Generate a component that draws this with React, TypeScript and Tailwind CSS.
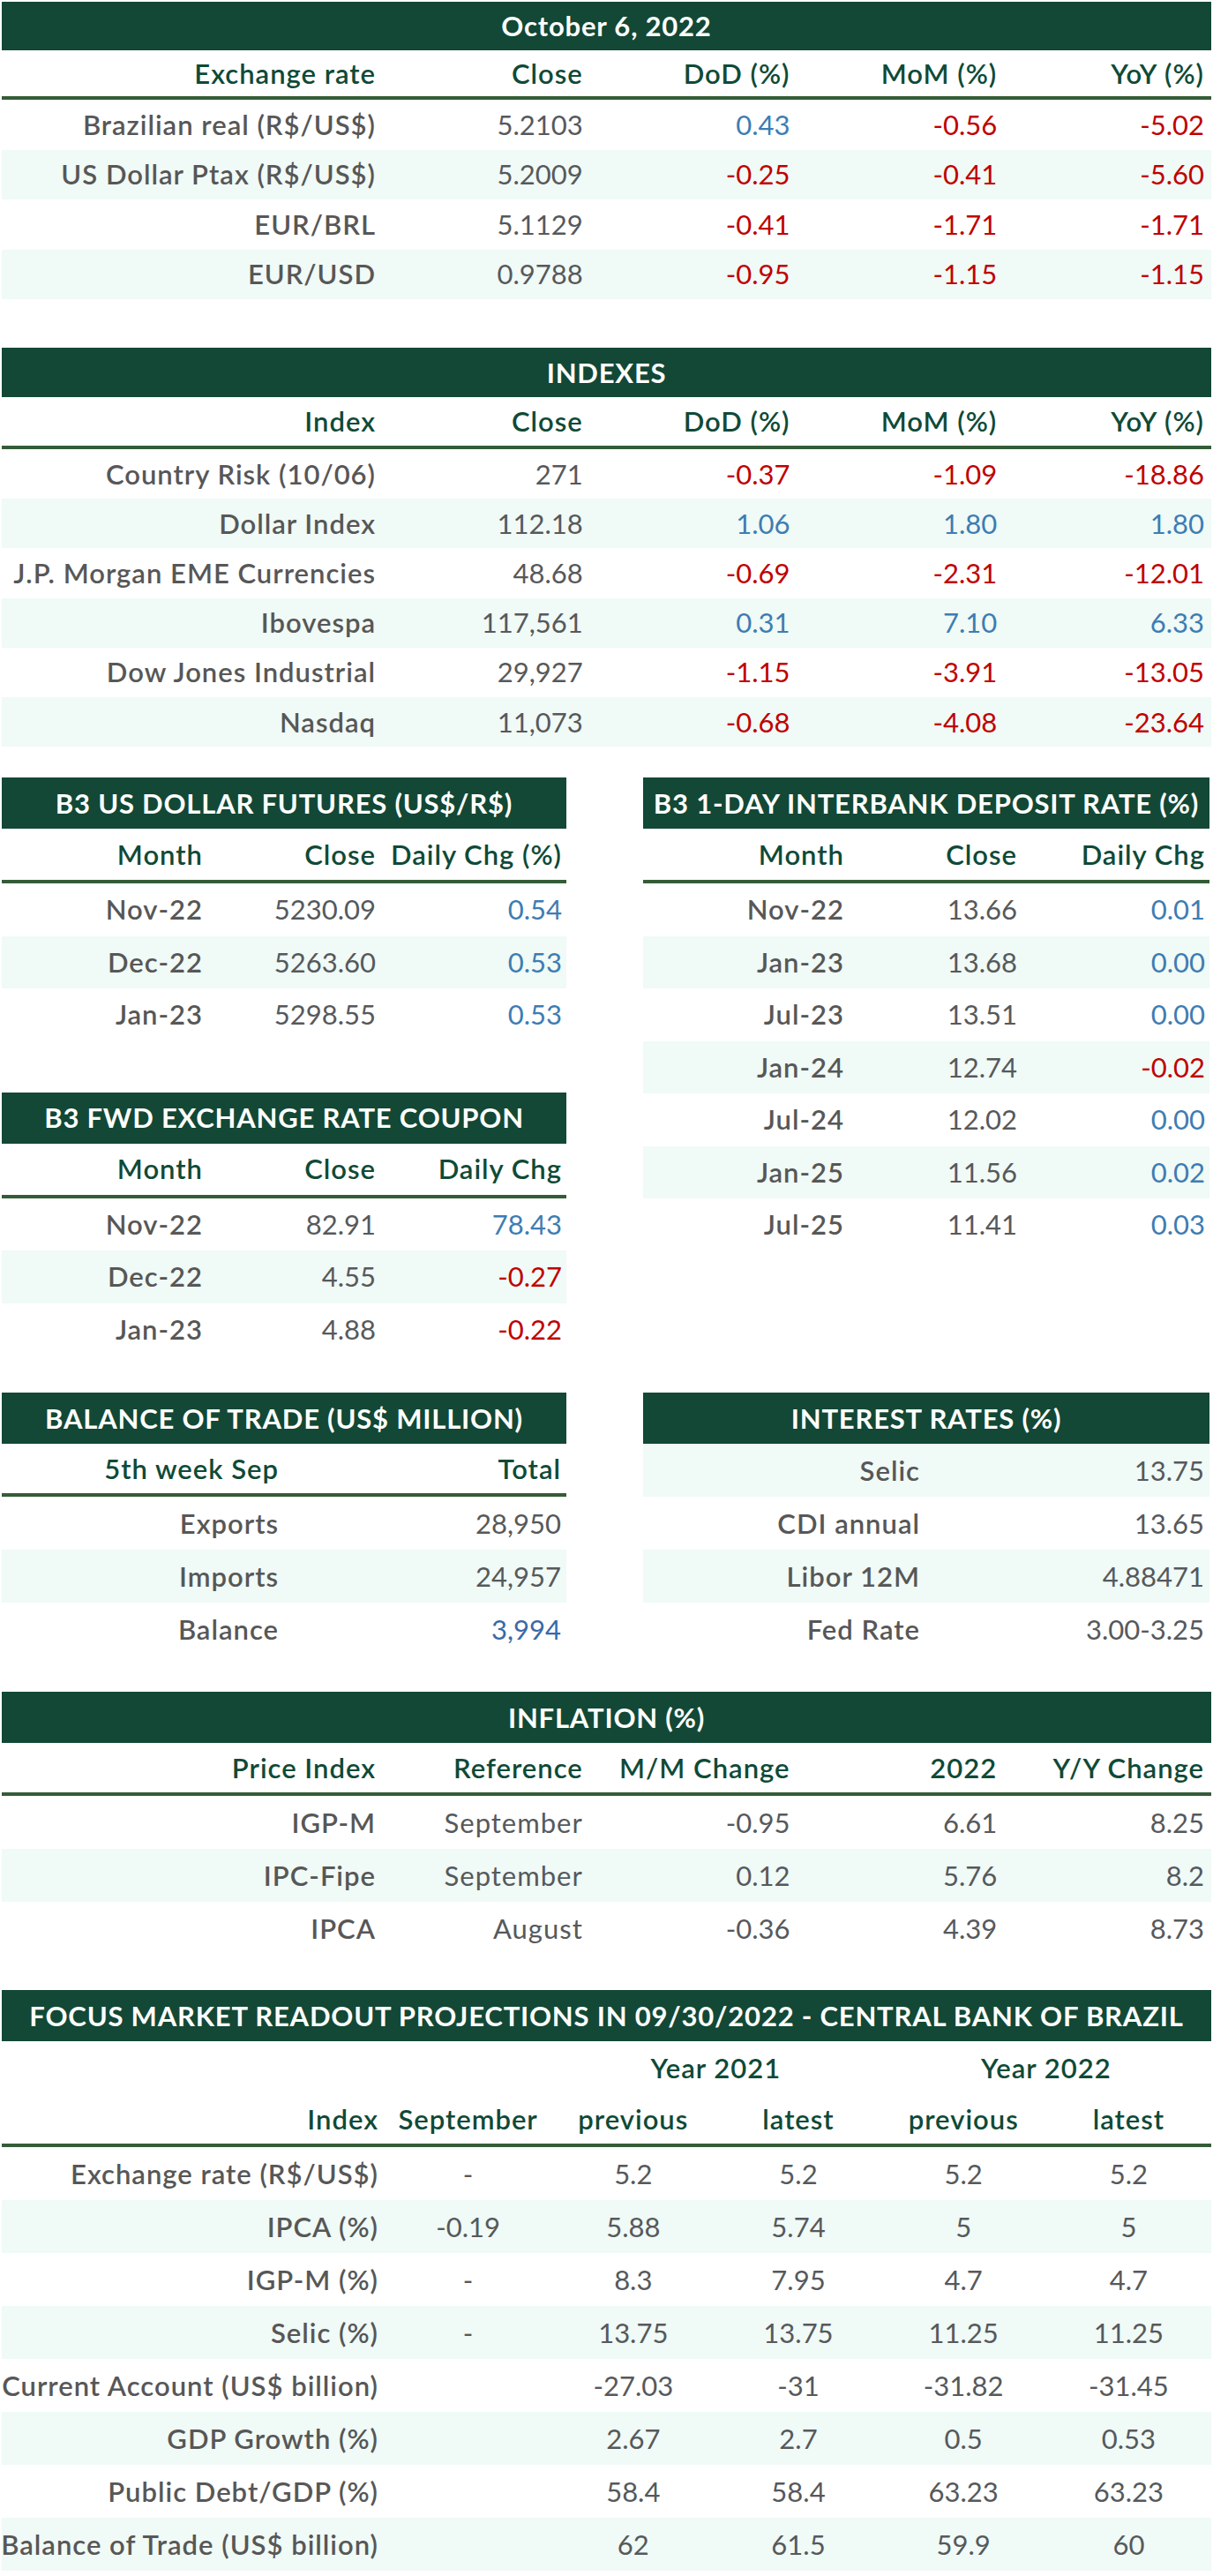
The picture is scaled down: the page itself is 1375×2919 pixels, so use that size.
import React from 'react';

const LABEL = 'text-[#575757] font-semibold tracking-[1px]';
const GRAY = 'text-[#56595c]';
const RED = 'text-[#c00000]';
const BLUE = 'text-[#3d7db3]';
const HEAD = 'text-[#0f4a37] font-semibold tracking-[1px]';

type Colorize = (r: number, c: number, t: string) => string;

const signCols =
  (cols: number[]): Colorize =>
  (_r, c, t) =>
    cols.includes(c) ? (t.startsWith('-') ? RED : BLUE) : GRAY;

const plain: Colorize = (_r, _c, t) => (/[a-z]/i.test(t) ? `${GRAY} tracking-[1px]` : GRAY);

function Bar({ title, h }: { title: string; h: string }) {
  return (
    <div className={`${h} bg-[#124835] flex items-center justify-center text-white font-bold tracking-[0.8px] whitespace-nowrap`}>
      {title}
    </div>
  );
}

function Row({
  cells,
  cols,
  h,
  striped,
  align,
  colorize,
  r,
}: {
  cells: string[];
  cols: string;
  h: string;
  striped: boolean;
  align: string[];
  colorize: Colorize;
  r: number;
}) {
  return (
    <div className={`grid ${cols} ${h} ${striped ? 'bg-[#f0faf6]' : ''}`}>
      {cells.map((t, c) => (
        <div
          key={c}
          className={`flex items-center whitespace-nowrap ${align[c]} ${c === 0 ? LABEL : colorize(r, c, t)}`}
        >
          {t}
        </div>
      ))}
    </div>
  );
}

function HeaderRow({ cells, cols, h, align }: { cells: string[]; cols: string; h: string; align: string[] }) {
  return (
    <div className={`grid ${cols} ${h} border-b-4 border-[#345c38] ${HEAD}`}>
      {cells.map((t, c) => (
        <div key={c} className={`flex items-center whitespace-nowrap ${align[c]}`}>
          {t}
        </div>
      ))}
    </div>
  );
}

function Table({
  title,
  barH,
  header,
  headH,
  rows,
  rowH,
  cols,
  align,
  colorize,
  stripeEven = false,
}: {
  title: string;
  barH: string;
  header?: string[];
  headH?: string;
  rows: string[][];
  rowH: string;
  cols: string;
  align: string[];
  colorize: Colorize;
  stripeEven?: boolean;
}) {
  return (
    <div>
      <Bar title={title} h={barH} />
      {header && headH && <HeaderRow cells={header} cols={cols} h={headH} align={align} />}
      {rows.map((cells, r) => (
        <Row
          key={r}
          r={r}
          cells={cells}
          cols={cols}
          h={rowH}
          striped={stripeEven ? r % 2 === 0 : r % 2 === 1}
          align={align}
          colorize={colorize}
        />
      ))}
    </div>
  );
}

const WIDE_COLS = 'grid-cols-[432px_repeat(4,1fr)]';
const WIDE_ALIGN = ['justify-end pr-2', 'justify-end pr-2', 'justify-end pr-2', 'justify-end pr-2', 'justify-end pr-2'];

const HALF_COLS = 'grid-cols-[236px_196px_1fr]';
const HALF_ALIGN = ['justify-end pr-2', 'justify-end pr-2', 'justify-end pr-[5px]'];

const PAIR_COLS = 'grid-cols-[322px_1fr]';
const PAIR_ALIGN = ['justify-end pr-2', 'justify-end pr-[6px]'];

const FOCUS_COLS = 'grid-cols-[435px_repeat(5,1fr)]';
const FOCUS_ALIGN = ['justify-end pr-2', 'justify-center', 'justify-center', 'justify-center', 'justify-center', 'justify-center'];

const focusRows: string[][] = [
  ['Exchange rate (R$/US$)', '-', '5.2', '5.2', '5.2', '5.2'],
  ['IPCA (%)', '-0.19', '5.88', '5.74', '5', '5'],
  ['IGP-M (%)', '-', '8.3', '7.95', '4.7', '4.7'],
  ['Selic (%)', '-', '13.75', '13.75', '11.25', '11.25'],
  ['Current Account (US$ billion)', '', '-27.03', '-31', '-31.82', '-31.45'],
  ['GDP Growth (%)', '', '2.67', '2.7', '0.5', '0.53'],
  ['Public Debt/GDP (%)', '', '58.4', '58.4', '63.23', '63.23'],
  ['Balance of Trade (US$ billion)', '', '62', '61.5', '59.9', '60'],
];

export default function App() {
  return (
    <div className="w-[1375px] bg-white px-[2px] pt-[2px] pb-[4px] font-['Lato','Noto_Sans',sans-serif] text-[31px] leading-none">
      <Table
        title="October 6, 2022"
        barH="h-[55px]"
        header={['Exchange rate', 'Close', 'DoD (%)', 'MoM (%)', 'YoY (%)']}
        headH="h-[56px]"
        rows={[
          ['Brazilian real (R$/US$)', '5.2103', '0.43', '-0.56', '-5.02'],
          ['US Dollar Ptax (R$/US$)', '5.2009', '-0.25', '-0.41', '-5.60'],
          ['EUR/BRL', '5.1129', '-0.41', '-1.71', '-1.71'],
          ['EUR/USD', '0.9788', '-0.95', '-1.15', '-1.15'],
        ]}
        rowH="h-[56.5px]"
        cols={WIDE_COLS}
        align={WIDE_ALIGN}
        colorize={signCols([2, 3, 4])}
      />

      <div className="mt-[55px]">
        <Table
          title="INDEXES"
          barH="h-[56px]"
          header={['Index', 'Close', 'DoD (%)', 'MoM (%)', 'YoY (%)']}
          headH="h-[59px]"
          rows={[
            ['Country Risk (10/06)', '271', '-0.37', '-1.09', '-18.86'],
            ['Dollar Index', '112.18', '1.06', '1.80', '1.80'],
            ['J.P. Morgan EME Currencies', '48.68', '-0.69', '-2.31', '-12.01'],
            ['Ibovespa', '117,561', '0.31', '7.10', '6.33'],
            ['Dow Jones Industrial', '29,927', '-1.15', '-3.91', '-13.05'],
            ['Nasdaq', '11,073', '-0.68', '-4.08', '-23.64'],
          ]}
          rowH="h-[56.2px]"
          cols={WIDE_COLS}
          align={WIDE_ALIGN}
          colorize={signCols([2, 3, 4])}
        />
      </div>

      <div className="mt-[35px] grid grid-cols-[640px_642px] gap-x-[87px] items-start">
        <div className="flex flex-col gap-[58px]">
          <Table
            title="B3 US DOLLAR FUTURES (US$/R$)"
            barH="h-[58px]"
            header={['Month', 'Close', 'Daily Chg (%)']}
            headH="h-[62px]"
            rows={[
              ['Nov-22', '5230.09', '0.54'],
              ['Dec-22', '5263.60', '0.53'],
              ['Jan-23', '5298.55', '0.53'],
            ]}
            rowH="h-[59.5px]"
            cols={HALF_COLS}
            align={HALF_ALIGN}
            colorize={signCols([2])}
          />
          <Table
            title="B3 FWD EXCHANGE RATE COUPON"
            barH="h-[58px]"
            header={['Month', 'Close', 'Daily Chg']}
            headH="h-[62px]"
            rows={[
              ['Nov-22', '82.91', '78.43'],
              ['Dec-22', '4.55', '-0.27'],
              ['Jan-23', '4.88', '-0.22'],
            ]}
            rowH="h-[59.5px]"
            cols={HALF_COLS}
            align={HALF_ALIGN}
            colorize={signCols([2])}
          />
        </div>
        <Table
          title="B3 1-DAY INTERBANK DEPOSIT RATE (%)"
          barH="h-[58px]"
          header={['Month', 'Close', 'Daily Chg']}
          headH="h-[62px]"
          rows={[
            ['Nov-22', '13.66', '0.01'],
            ['Jan-23', '13.68', '0.00'],
            ['Jul-23', '13.51', '0.00'],
            ['Jan-24', '12.74', '-0.02'],
            ['Jul-24', '12.02', '0.00'],
            ['Jan-25', '11.56', '0.02'],
            ['Jul-25', '11.41', '0.03'],
          ]}
          rowH="h-[59.5px]"
          cols={HALF_COLS}
          align={HALF_ALIGN}
          colorize={signCols([2])}
        />
      </div>

      <div className="mt-[42px] grid grid-cols-[640px_642px] gap-x-[87px] items-start">
        <Table
          title="BALANCE OF TRADE (US$ MILLION)"
          barH="h-[58px]"
          header={['5th week Sep', 'Total']}
          headH="h-[60px]"
          rows={[
            ['Exports', '28,950'],
            ['Imports', '24,957'],
            ['Balance', '3,994'],
          ]}
          rowH="h-[60px]"
          cols={PAIR_COLS}
          align={PAIR_ALIGN}
          colorize={(r) => (r === 2 ? 'text-[#3a68a8]' : GRAY)}
        />
        <Table
          title="INTEREST RATES (%)"
          barH="h-[58px]"
          rows={[
            ['Selic', '13.75'],
            ['CDI annual', '13.65'],
            ['Libor 12M', '4.88471'],
            ['Fed Rate', '3.00-3.25'],
          ]}
          rowH="h-[60px]"
          cols={PAIR_COLS}
          align={PAIR_ALIGN}
          colorize={plain}
          stripeEven
        />
      </div>

      <div className="mt-[41px]">
        <Table
          title="INFLATION (%)"
          barH="h-[58px]"
          header={['Price Index', 'Reference', 'M/M Change', '2022', 'Y/Y Change']}
          headH="h-[60px]"
          rows={[
            ['IGP-M', 'September', '-0.95', '6.61', '8.25'],
            ['IPC-Fipe', 'September', '0.12', '5.76', '8.2'],
            ['IPCA', 'August', '-0.36', '4.39', '8.73'],
          ]}
          rowH="h-[60px]"
          cols={WIDE_COLS}
          align={WIDE_ALIGN}
          colorize={plain}
        />
      </div>

      <div className="mt-[40px]">
        <Bar title="FOCUS MARKET READOUT PROJECTIONS IN 09/30/2022 - CENTRAL BANK OF BRAZIL" h="h-[58px]" />
        <div className={`grid ${FOCUS_COLS} h-[60px] ${HEAD}`}>
          <div />
          <div />
          <div className="col-span-2 flex items-center justify-center">Year 2021</div>
          <div className="col-span-2 flex items-center justify-center">Year 2022</div>
        </div>
        <HeaderRow
          cells={['Index', 'September', 'previous', 'latest', 'previous', 'latest']}
          cols={FOCUS_COLS}
          h="h-[60px]"
          align={FOCUS_ALIGN}
        />
        {focusRows.map((cells, r) => (
          <Row
            key={r}
            r={r}
            cells={cells}
            cols={FOCUS_COLS}
            h="h-[60px]"
            striped={r % 2 === 1}
            align={FOCUS_ALIGN}
            colorize={plain}
          />
        ))}
      </div>
    </div>
  );
}
